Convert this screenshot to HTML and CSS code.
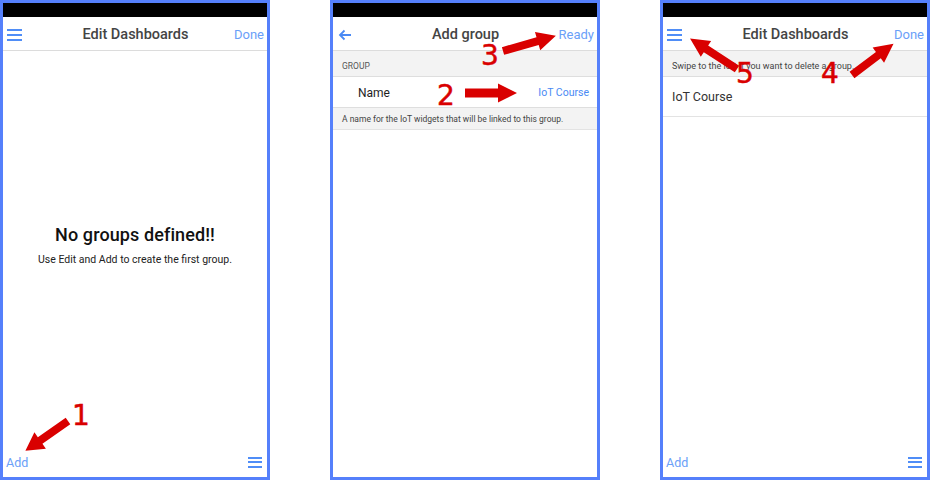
FILE: index.html
```html
<!DOCTYPE html>
<html>
<head>
<meta charset="utf-8">
<link rel="stylesheet" href="styles.css">
</head>
<body>
<div class="stage">
  <div class="phone">
    <div class="status"></div>
    <div class="header">
      <div class="hleft"><span class="burger"><i></i><i></i><i></i></span></div>
      <div class="title">Edit Dashboards</div>
      <div class="hright link">Done</div>
    </div>
    <div class="content empty">
      <div class="empty-title">No groups defined!!</div>
      <div class="empty-sub">Use Edit and Add to create the first group.</div>
    </div>
    <div class="toolbar">
      <span class="link add">Add</span>
      <span class="burger small"><i></i><i></i><i></i></span>
    </div>
  </div>

  <div class="phone">
    <div class="status"></div>
    <div class="header">
      <div class="hleft">
        <svg class="back" width="14" height="12" viewBox="0 0 14 12"><path d="M13 6H2M6.5 1.5L2 6l4.5 4.5" fill="none" stroke="#4a8af4" stroke-width="1.8"/></svg>
      </div>
      <div class="title">Add group</div>
      <div class="hright link">Ready</div>
    </div>
    <div class="content">
      <div class="section-head">GROUP</div>
      <div class="form-row">
        <span class="label">Name</span>
        <span class="value">IoT Course</span>
      </div>
      <div class="section-foot">A name for the IoT widgets that will be linked to this group.</div>
    </div>
  </div>

  <div class="phone">
    <div class="status"></div>
    <div class="header">
      <div class="hleft"><span class="burger"><i></i><i></i><i></i></span></div>
      <div class="title">Edit Dashboards</div>
      <div class="hright link">Done</div>
    </div>
    <div class="content">
      <div class="section-head swipe">Swipe to the left if you want to delete a group.</div>
      <div class="list-row">IoT Course</div>
    </div>
    <div class="toolbar">
      <span class="link add">Add</span>
      <span class="burger small"><i></i><i></i><i></i></span>
    </div>
  </div>

  <svg class="notes" width="930" height="480" viewBox="0 0 930 480">
    <g fill="#d90000">
      <g transform="translate(68,421) rotate(145)"><polygon points="0,-4 34,-4 34,-10 52,0 34,10 34,4 0,4"/></g>
      <g transform="translate(465,93) rotate(0)"><polygon points="0,-4.5 33,-4.5 33,-9.5 52,0 33,9.5 33,4.5 0,4.5"/></g>
      <g transform="translate(503,51) rotate(-16)"><polygon points="0,-4 36,-4 36,-9.5 55,0 36,9.5 36,4 0,4"/></g>
      <g transform="translate(852,75) rotate(-37)"><polygon points="0,-4 33,-4 33,-9.5 52,0 33,9.5 33,4 0,4"/></g>
      <g transform="translate(737,69) rotate(-147)"><polygon points="0,-4 37,-4 37,-9.5 56,0 37,9.5 37,4 0,4"/></g>
    </g>
    <g class="num" fill="#d90000" stroke="#d90000" stroke-width="0.5">
      <text x="72" y="425">1</text>
      <text x="437" y="105">2</text>
      <text x="481" y="65">3</text>
      <text x="821" y="83">4</text>
      <text x="736" y="83">5</text>
    </g>
  </svg>
</div>
</body>
</html>
```
FILE: styles.css
```css
* { box-sizing: border-box; margin: 0; padding: 0; }
html, body { width: 930px; height: 480px; background: #fff; overflow: hidden; }
body { font-family: Roboto, "Noto Sans", sans-serif; }

.stage {
  position: relative;
  display: flex;
  gap: 60px;
  width: 930px;
  height: 480px;
}

.phone {
  width: 270px;
  height: 480px;
  border: 3px solid #5580fb;
  display: flex;
  flex-direction: column;
  background: #fff;
}

.status { height: 14px; background: #000; flex: none; }

.header {
  height: 34px;
  flex: none;
  display: flex;
  align-items: center;
  border-bottom: 1px solid #dcdcdc;
  padding: 2px 3px 0 4px;
  position: relative;
}
.hleft { width: 60px; display: flex; align-items: center; }
.hright { width: 60px; text-align: right; font-size: 13px; }
.title {
  flex: 1;
  text-align: center;
  font-size: 14.5px;
  font-weight: 500;
  color: #444;
}
.link { color: #6aa0f8; }

.burger { display: flex; flex-direction: column; gap: 3px; width: 15px; }
.burger i { display: block; height: 2px; background: #4f8df7; }
.burger.small { width: 14px; gap: 2.5px; }
.burger.small i { height: 2px; }

.back { display: block; margin-left: 1px; }

.content { flex: 1; display: flex; flex-direction: column; }
.content.empty { align-items: center; justify-content: center; padding-bottom: 8px; }
.empty-title { font-size: 18px; font-weight: 500; color: #111; letter-spacing: 0.1px; }
.empty-sub { font-size: 10.5px; color: #222; margin-top: 8px; }

.section-head {
  height: 26px;
  background: #f3f3f3;
  border-bottom: 1px solid #dedede;
  font-size: 8.5px;
  color: #555;
  padding: 4px 9px 0;
  display: flex;
  align-items: center;
}
.section-head.swipe { font-size: 9px; color: #444; }

.form-row {
  height: 31px;
  display: flex;
  align-items: center;
  justify-content: space-between;
  padding: 1px 8px 0 25px;
  border-bottom: 1px solid #dedede;
}
.label { font-size: 12px; color: #1e1e1e; }
.value { font-size: 10.5px; color: #4a8af4; }

.section-foot {
  height: 22px;
  background: #f3f3f3;
  border-bottom: 1px solid #e3e3e3;
  font-size: 8.5px;
  color: #444;
  padding: 0 9px;
  display: flex;
  align-items: center;
}

.list-row {
  height: 40px;
  display: flex;
  align-items: center;
  padding: 0 9px;
  font-size: 12.5px;
  color: #333;
  border-bottom: 1px solid #e3e3e3;
}

.toolbar {
  height: 30px;
  flex: none;
  display: flex;
  align-items: center;
  justify-content: space-between;
  padding: 0 5px 0 3px;
}
.add { font-size: 12.5px; }

.notes { position: absolute; left: 0; top: 0; pointer-events: none; }
.num text { font-family: "DejaVu Sans", sans-serif; font-size: 28px; }
```
